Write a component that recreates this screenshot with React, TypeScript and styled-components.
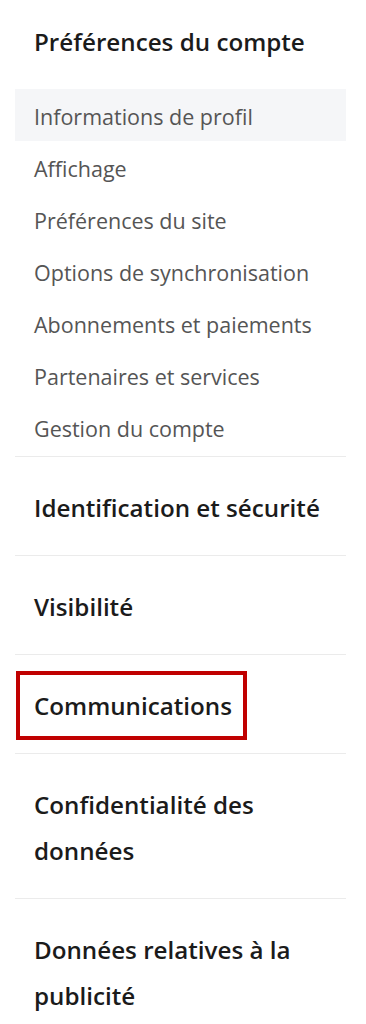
import React from "react";
import styled, { createGlobalStyle } from "styled-components";

const Global = createGlobalStyle`
  html, body { margin: 0; padding: 0; background: #ffffff; }
  body { font-family: "Open Sans", "Noto Sans", "Liberation Sans", sans-serif; }
`;

const Nav = styled.nav`
  width: 331px;
  margin-left: 15px;
  display: flex;
  flex-direction: column;
`;

const Section = styled.section<{ $last?: boolean }>`
  border-bottom: ${(p) => (p.$last ? "none" : "1px solid #ebebeb")};
`;

const Title = styled.h2`
  margin: 0;
  padding: 16px 0 0 19px;
  height: 52px;
  line-height: 52px;
  font-size: 24.2px;
  font-weight: 600;
  color: #1b1b1b;
`;

const List = styled.ul`
  list-style: none;
  margin: 21px 0 0;
  padding: 0 0 3px;
`;

const Item = styled.li<{ $active?: boolean }>`
  height: 52px;
  line-height: 55px;
  padding-left: 19px;
  font-size: 21.5px;
  color: #555555;
  white-space: nowrap;
  background: ${(p) => (p.$active ? "#f5f6f8" : "transparent")};
`;

const SectionLink = styled.div`
  padding: 28px 6px 24px 19px;
  line-height: 46px;
  font-size: 24.2px;
  font-weight: 600;
  color: #1b1b1b;
`;

const HighlightWrap = styled.div`
  padding: 16px 0 13px 1px;
  display: flex;
`;

const Highlight = styled.div`
  border: 4px solid #c00000;
  padding: 8px 11px 7px 14px;
  line-height: 46px;
  font-size: 24.2px;
  font-weight: 600;
  color: #1b1b1b;
`;

const items = [
  "Informations de profil",
  "Affichage",
  "Préférences du site",
  "Options de synchronisation",
  "Abonnements et paiements",
  "Partenaires et services",
  "Gestion du compte",
];

export default function App() {
  return (
    <>
      <Global />
      <Nav>
        <Section>
          <Title>Préférences du compte</Title>
          <List>
            {items.map((t, i) => (
              <Item key={t} $active={i === 0}>
                {t}
              </Item>
            ))}
          </List>
        </Section>
        <Section>
          <SectionLink>Identification et sécurité</SectionLink>
        </Section>
        <Section>
          <SectionLink>Visibilité</SectionLink>
        </Section>
        <Section>
          <HighlightWrap>
            <Highlight>Communications</Highlight>
          </HighlightWrap>
        </Section>
        <Section>
          <SectionLink>Confidentialité des données</SectionLink>
        </Section>
        <Section $last>
          <SectionLink>Données relatives à la publicité</SectionLink>
        </Section>
      </Nav>
    </>
  );
}
